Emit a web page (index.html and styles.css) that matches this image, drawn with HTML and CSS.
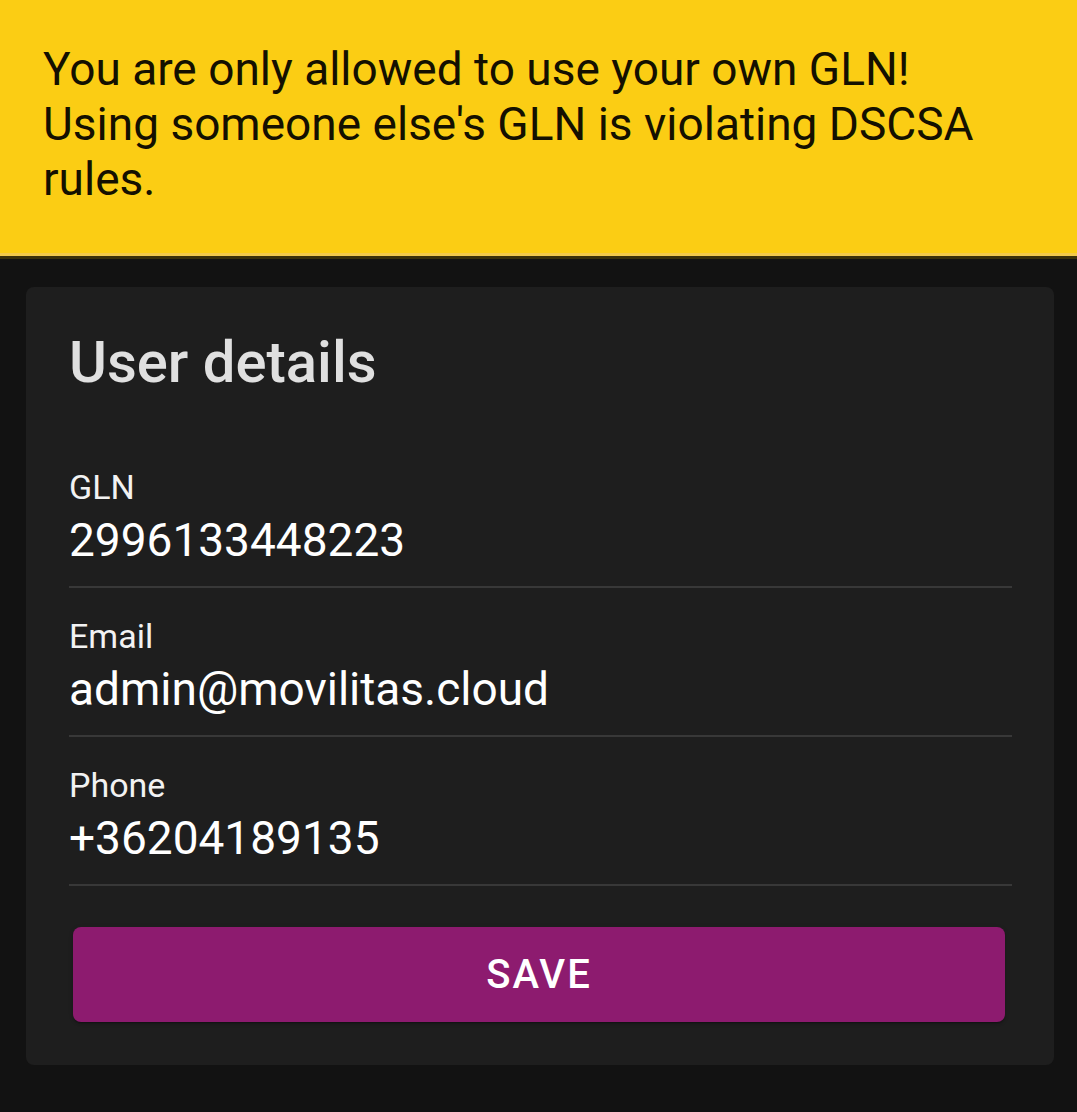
FILE: index.html
```html
<!DOCTYPE html>
<html lang="en">
<head>
  <meta charset="UTF-8">
  <meta name="viewport" content="width=device-width, initial-scale=1.0">
  <title>User details</title>
  <link rel="stylesheet" href="styles.css">
</head>
<body>
  <div class="warning">
    You are only allowed to use your own GLN!<br>
    Using someone else's GLN is violating DSCSA rules.
  </div>

  <div class="page">
    <form class="card" id="userForm">
      <h2>User details</h2>

      <div class="field">
        <label>GLN</label>
        <div class="value">2996133448223</div>
      </div>
      <div class="field">
        <label>Email</label>
        <div class="value">admin@movilitas.cloud</div>
      </div>
      <div class="field">
        <label>Phone</label>
        <div class="value">+36204189135</div>
      </div>

      <button type="submit">Save</button>
    </form>
  </div>
</body>
</html>
```

FILE: styles.css
```css
body {
  font-family: Roboto, "Noto Sans", Arial, sans-serif;
  background-color: #121212;
  margin: 0;
  padding: 0;
  color: #fff;
}

.warning {
  background-color: #fbcd14;
  color: #141000;
  font-size: 46px;
  line-height: 55px;
  padding: 42px 43px 49px;
  border-bottom: 3px solid #3a300a;
  box-shadow: inset 0 -3px 0 #f2c94a;
}

.page {
  padding: 28px 23px 40px 26px;
}

.card {
  background-color: #1e1e1e;
  border-radius: 8px;
  padding: 40px 42px 43px 43px;
}

h2 {
  margin: 0 0 42px;
  font-size: 58px;
  line-height: 70px;
  font-weight: 500;
  color: #e0e0e0;
}

.field {
  padding: 28px 0 18px;
  border-bottom: 2px solid #383838;
}

.field label {
  display: block;
  font-size: 34px;
  line-height: 40px;
  color: #f2f2f2;
}

.value {
  margin-top: 5px;
  font-size: 46px;
  line-height: 56px;
  color: #fff;
}

button {
  display: block;
  width: calc(100% - 11px);
  height: 95px;
  margin: 41px 7px 0 4px;
  background-color: #8d1b6f;
  color: #fff;
  border: none;
  border-radius: 8px;
  font-family: inherit;
  font-size: 40px;
  font-weight: 500;
  letter-spacing: 2px;
  text-transform: uppercase;
  cursor: pointer;
  box-shadow: 0 3px 1px -2px rgba(0,0,0,0.2), 0 2px 2px 0 rgba(0,0,0,0.14), 0 1px 5px 0 rgba(0,0,0,0.12);
}
```
